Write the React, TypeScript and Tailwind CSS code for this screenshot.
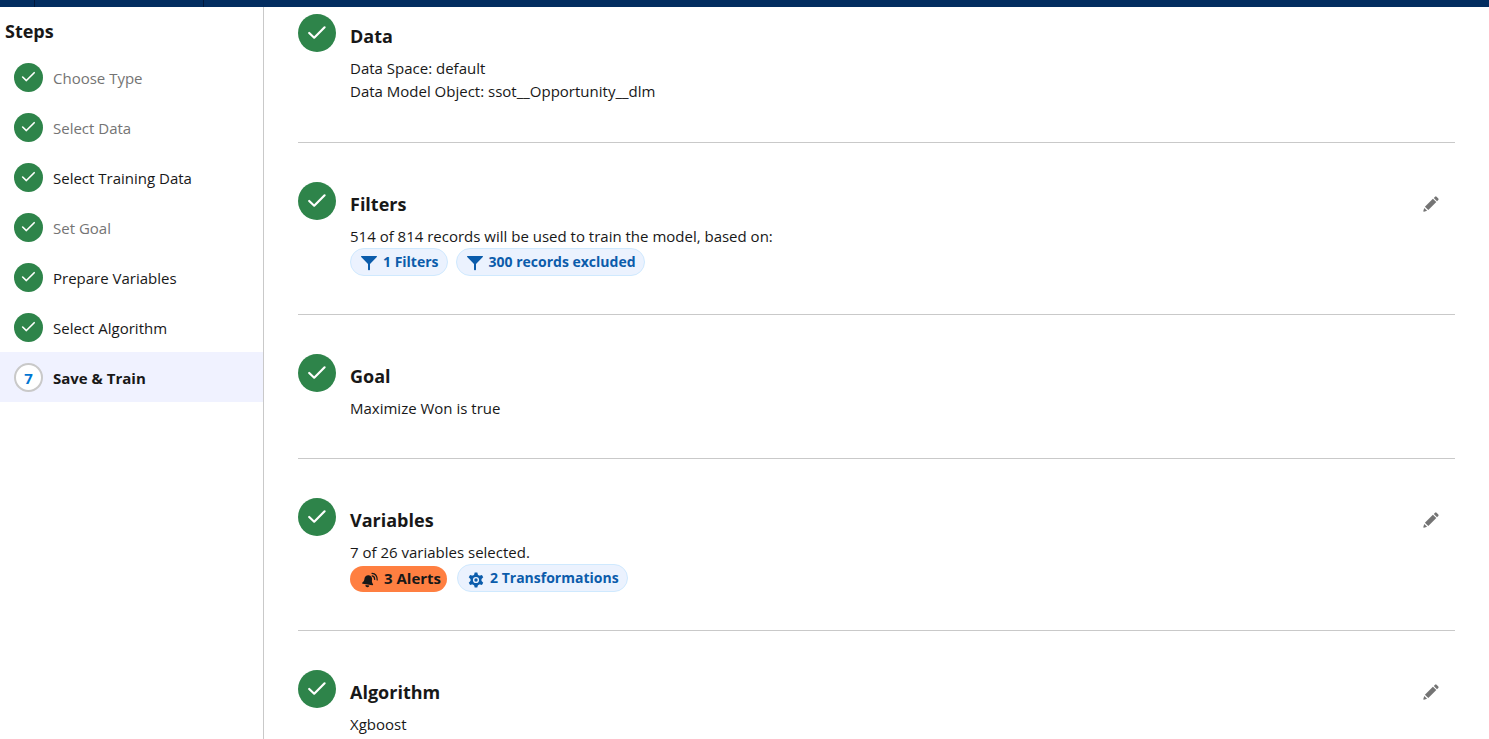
import type { ReactNode } from 'react';

type Step = { label: string; muted?: boolean };

const steps: Step[] = [
  { label: 'Choose Type', muted: true },
  { label: 'Select Data', muted: true },
  { label: 'Select Training Data' },
  { label: 'Set Goal', muted: true },
  { label: 'Prepare Variables' },
  { label: 'Select Algorithm' },
];

function Check({ large = false }: { large?: boolean }) {
  return (
    <span
      className={`flex shrink-0 items-center justify-center rounded-full bg-[#2e844a] text-white ${
        large ? 'size-[38px]' : 'size-[29px]'
      }`}
    >
      <svg
        viewBox="0 0 20 16"
        className={large ? 'h-4 w-5' : 'h-3 w-[15px]'}
        fill="none"
        stroke="currentColor"
        strokeWidth="2.2"
        strokeLinecap="round"
        strokeLinejoin="round"
        aria-hidden="true"
      >
        <path d="M2.2 8 7.2 12.7 17.6 2.3" />
      </svg>
    </span>
  );
}

function Funnel() {
  return (
    <svg viewBox="0 0 16 16" className="mt-[3px] size-4" fill="currentColor" aria-hidden="true">
      <path d="M.6 1h14.8c.6 0 .8.6.4 1L9 8.900V14.500c0 .4-.3.700-.700.700h-.6c-.4 0-.700-.3-.700-.700V8.900L.2 2C-.2 1.600 0 1 .6 1z" />
    </svg>
  );
}

function Gear() {
  const teeth = [0, 60, 120, 180, 240, 300];
  return (
    <svg viewBox="0 0 16 16" className="mt-1 size-4" aria-hidden="true">
      {teeth.map((angle) => (
        <path key={angle} d="M6.700 .4h2.600l.9 3.600H5.800z" fill="currentColor" transform={`rotate(${angle} 8 8)`} />
      ))}
      <circle cx="8" cy="8" r="4.300" fill="none" stroke="currentColor" strokeWidth="2.400" />
      <circle cx="8" cy="8" r="1.700" fill="currentColor" />
    </svg>
  );
}

function Bell() {
  return (
    <svg viewBox="0 0 16 16" className="mt-0.5 size-4" aria-hidden="true">
      <g fill="currentColor" transform="rotate(8 6 9)">
        <path d="M6 3.200c2.400 0 3.800 1.700 3.800 3.900 0 2.100.4 3.200 1.500 4.100.5.400.3 1.300-.4 1.300H1.100c-.7 0-.9-.9-.4-1.300 1.100-.9 1.500-2 1.500-4.100 0-2.200 1.400-3.900 3.800-3.900z" />
        <path d="M4 13.300h4a2 2 0 0 1-4 0z" />
      </g>
      <g fill="none" stroke="currentColor" strokeWidth="1.200" strokeLinecap="round">
        <path d="M10 1.300c3.200.2 5.200 2.700 5.200 6.700" />
        <path d="M10.200 3.900c1.700.3 2.500 1.600 2.500 3.500" />
      </g>
    </svg>
  );
}

function EditButton({ name }: { name: string }) {
  return (
    <button type="button" aria-label={`Edit ${name}`} className="mt-3.5 mr-4 size-4 shrink-0 text-[#747474]">
      <svg viewBox="0 0 16 16" className="size-4" fill="currentColor" aria-hidden="true">
        <path d="M12.100.7a1 1 0 0 1 1.400 0l1.800 1.800a1 1 0 0 1 0 1.400l-1.300 1.300-3.200-3.200z" />
        <path d="M9.900 2.700l3.400 3.400-8 8-3.400-3.400z" />
        <path d="M1.300 11.900l2.800 2.800-3.100 1c-.4.100-.8-.2-.7-.7z" />
      </svg>
    </button>
  );
}

function Pill({ icon, children }: { icon: ReactNode; children: ReactNode }) {
  return (
    <button
      type="button"
      className="flex h-7 items-center gap-1.5 rounded-full border border-[#cfe9fe] bg-[#ebf2fe] pr-2 pb-px pl-2.5 text-sm font-bold text-[#0b5cab]"
    >
      {icon}
      {children}
    </button>
  );
}

function Section({
  title,
  editable = false,
  first = false,
  last = false,
  children,
}: {
  title: string;
  editable?: boolean;
  first?: boolean;
  last?: boolean;
  children: ReactNode;
}) {
  return (
    <section
      className={`flex items-start gap-3.5 border-[#c9c9c9] ${first ? 'pt-[7px]' : 'pt-[39px]'} ${
        last ? '' : first ? 'border-b pb-[39px]' : 'border-b pb-[38px]'
      }`}
    >
      <Check large />
      <div className="min-w-0 flex-1">
        <h2 className="pt-2 pb-[7px] text-lg leading-7 font-bold">{title}</h2>
        {children}
      </div>
      {editable && <EditButton name={title} />}
    </section>
  );
}

export default function App() {
  return (
    <div className="flex min-h-screen flex-col bg-white font-['Open_Sans',sans-serif] text-[15px] leading-[23px] text-[#181818]">
      <header className="flex h-[7px] shrink-0 bg-[#032d60]">
        <div className="w-[35px] border-r border-[#03183a]" />
        <div className="w-[169px] border-r border-[#03183a]" />
      </header>
      <div className="flex flex-1">
        <aside className="w-[264px] shrink-0 border-r border-[#c9c9c9]">
          <h1 className="flex h-[45px] items-center px-[5px] pt-0.5 text-lg leading-7 font-bold">Steps</h1>
          <nav aria-label="Steps">
            <ol>
              {steps.map(({ label, muted }) => (
                <li key={label}>
                  <a href="#" className="flex h-[50px] items-center gap-2.5 px-3.5">
                    <Check />
                    <span className={muted ? 'pt-0.5 text-[#747474]' : 'pt-0.5'}>{label}</span>
                  </a>
                </li>
              ))}
              <li>
                <a href="#" aria-current="step" className="flex h-[50px] items-center gap-2.5 bg-[#f0f2ff] px-3.5 font-bold">
                  <span className="flex size-[29px] items-center justify-center rounded-full border-2 border-[#c9c9c9] bg-white pt-0.5 text-[#0176d3]">
                    7
                  </span>
                  <span className="pt-0.5">Save &amp; Train</span>
                </a>
              </li>
            </ol>
          </nav>
        </aside>
        <main className="min-w-0 flex-1 px-[34px]">
          <Section title="Data" first>
            <p>Data Space: default</p>
            <p>Data Model Object: ssot__Opportunity__dlm</p>
          </Section>
          <Section title="Filters" editable>
            <p>514 of 814 records will be used to train the model, based on:</p>
            <div className="flex gap-2">
              <Pill icon={<Funnel />}>1 Filters</Pill>
              <Pill icon={<Funnel />}>300 records excluded</Pill>
            </div>
          </Section>
          <Section title="Goal">
            <p>Maximize Won is true</p>
          </Section>
          <Section title="Variables" editable>
            <p>7 of 26 variables selected.</p>
            <div className="flex items-end gap-2.5">
              <button
                type="button"
                className="flex h-[26px] items-center gap-1.5 rounded-full bg-[#ff7f41] pr-1.5 pb-px pl-3 text-[15px] font-bold"
              >
                <Bell />
                3 Alerts
              </button>
              <Pill icon={<Gear />}>2 Transformations</Pill>
            </div>
          </Section>
          <Section title="Algorithm" editable last>
            <p>Xgboost</p>
          </Section>
        </main>
      </div>
    </div>
  );
}
